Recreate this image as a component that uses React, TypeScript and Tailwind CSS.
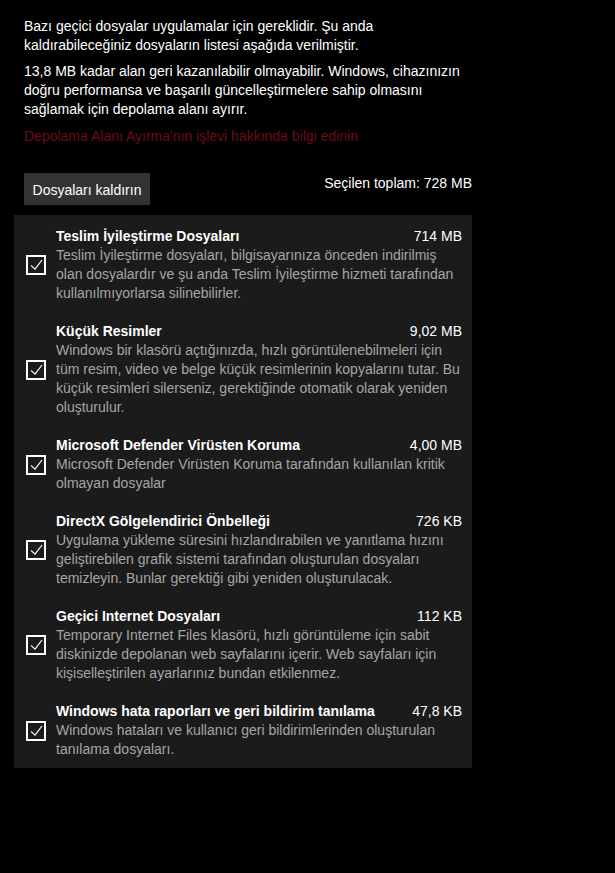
import React from 'react';

interface CleanupItem {
  title: string;
  size: string;
  lines: string[];
}

const items: CleanupItem[] = [
  {
    title: 'Teslim İyileştirme Dosyaları',
    size: '714 MB',
    lines: [
      'Teslim İyileştirme dosyaları, bilgisayarınıza önceden indirilmiş',
      'olan dosyalardır ve şu anda Teslim İyileştirme hizmeti tarafından',
      'kullanılmıyorlarsa silinebilirler.',
    ],
  },
  {
    title: 'Küçük Resimler',
    size: '9,02 MB',
    lines: [
      'Windows bir klasörü açtığınızda, hızlı görüntülenebilmeleri için',
      'tüm resim, video ve belge küçük resimlerinin kopyalarını tutar. Bu',
      'küçük resimleri silerseniz, gerektiğinde otomatik olarak yeniden',
      'oluşturulur.',
    ],
  },
  {
    title: 'Microsoft Defender Virüsten Koruma',
    size: '4,00 MB',
    lines: [
      'Microsoft Defender Virüsten Koruma tarafından kullanılan kritik',
      'olmayan dosyalar',
    ],
  },
  {
    title: 'DirectX Gölgelendirici Önbelleği',
    size: '726 KB',
    lines: [
      'Uygulama yükleme süresini hızlandırabilen ve yanıtlama hızını',
      'geliştirebilen grafik sistemi tarafından oluşturulan dosyaları',
      'temizleyin. Bunlar gerektiği gibi yeniden oluşturulacak.',
    ],
  },
  {
    title: 'Geçici Internet Dosyaları',
    size: '112 KB',
    lines: [
      'Temporary Internet Files klasörü, hızlı görüntüleme için sabit',
      'diskinizde depolanan web sayfalarını içerir. Web sayfaları için',
      'kişiselleştirilen ayarlarınız bundan etkilenmez.',
    ],
  },
  {
    title: 'Windows hata raporları ve geri bildirim tanılama',
    size: '47,8 KB',
    lines: [
      'Windows hataları ve kullanıcı geri bildirimlerinden oluşturulan',
      'tanılama dosyaları.',
    ],
  },
];

const CheckBox: React.FC = () => (
  <div className="w-5 h-5 shrink-0 border-2 border-white flex items-center justify-center">
    <svg width="16" height="16" viewBox="0 0 16 16" fill="none">
      <path d="M3 8.4 L7 12.2 L14 3" stroke="white" strokeWidth="1.2" />
    </svg>
  </div>
);

export default function App() {
  return (
    <div className="min-h-[873px] w-full bg-black text-white text-[14px] leading-[19px] font-['Segoe_UI','Liberation_Sans',Arial,sans-serif]">
      <div className="pt-[17px] pl-[14px] w-[472px]">
        <div className="pl-[10px]">
          <p className="whitespace-nowrap">
            Bazı geçici dosyalar uygulamalar için gereklidir. Şu anda
            <br />
            kaldırabileceğiniz dosyaların listesi aşağıda verilmiştir.
          </p>
          <p className="mt-[7px] whitespace-nowrap">
            13,8 MB kadar alan geri kazanılabilir olmayabilir. Windows, cihazınızın
            <br />
            doğru performansa ve başarılı güncelleştirmelere sahip olmasını
            <br />
            sağlamak için depolama alanı ayırır.
          </p>
          <a className="block mt-[8px] text-[#6e0b16] whitespace-nowrap">
            Depolama Alanı Ayırma'nın işlevi hakkında bilgi edinin
          </a>

          {/* Actions */}
          <div className="mt-[27px] flex justify-between items-start">
            <button
              type="button"
              className="h-8 w-[126px] bg-[#333333] text-white text-[14px] leading-[19px] pt-[2px]"
            >
              Dosyaları kaldırın
            </button>
            <span className="whitespace-nowrap pt-[1px]">Seçilen toplam: 728 MB</span>
          </div>
        </div>

        {/* File list */}
        <div className="mt-[10px] w-[458px] bg-[#1b1b1b] pt-[12px] pb-[9px] pl-3 pr-[10px] flex flex-col gap-[19px]">
          {items.map(item => (
            <div key={item.title} className="flex items-center gap-[10px]">
              <CheckBox />
              <div className="flex-1">
                <div className="flex justify-between">
                  <span className="font-bold whitespace-nowrap">{item.title}</span>
                  <span className="whitespace-nowrap">{item.size}</span>
                </div>
                <div className="text-[#a6a6a6] whitespace-nowrap">
                  {item.lines.map(line => (
                    <div key={line}>{line}</div>
                  ))}
                </div>
              </div>
            </div>
          ))}
        </div>
      </div>
    </div>
  );
}
